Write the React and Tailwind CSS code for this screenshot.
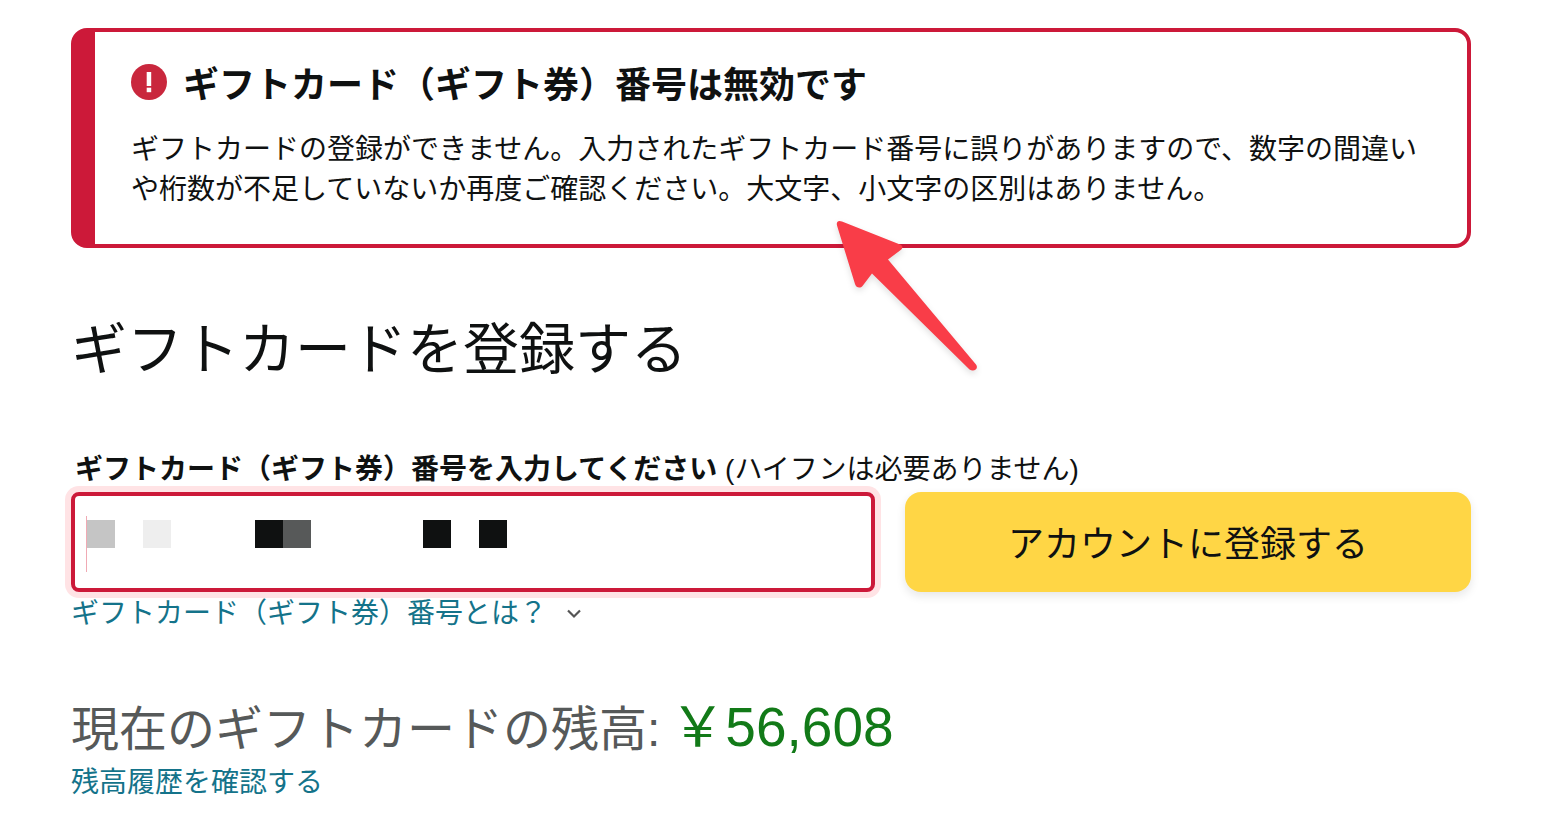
import React from "react";

function ErrorAlert() {
  return (
    <section
      role="alert"
      className="relative rounded-2xl border-4 border-l-24 border-[#cc1939] bg-white px-9 pt-8 pb-[34px]"
    >
      <div className="flex items-start gap-4">
        <svg viewBox="0 0 36 36" className="h-9 w-9 shrink-0" aria-hidden="true">
          <circle cx="18" cy="18" r="18" fill="#c9273d" />
          <rect x="15.700" y="8" width="4.500" height="14" fill="#fff" />
          <rect x="15.700" y="23.700" width="4.500" height="4.500" fill="#fff" />
        </svg>
        <h2 className="text-4xl leading-[44px] font-bold">
          ギフトカード（ギフト券）番号は無効です
        </h2>
      </div>
      <p className="mt-[22px] text-[28px] leading-10">
        ギフトカードの登録ができません。入力されたギフトカード番号に誤りがありますので、数字の間違いや桁数が不足していないか再度ご確認ください。大文字、小文字の区別はありません。
      </p>
      <svg
        viewBox="0 0 160 170"
        className="pointer-events-none absolute top-[178px] left-[735px] h-[170px] w-[160px] overflow-visible drop-shadow-md"
        aria-hidden="true"
      >
        <path
          d="M7 15.500C6 11.500 8.500 10 12 11.500L70 34.500C73.500 36 73 38.500 70 40.500L58 49.500L146 154.500C149 158.500 144 162.500 139.500 159.500L42 63.500L32.500 76C30 79 26 77.500 25 74Z"
          fill="#f93d48"
        />
      </svg>
    </section>
  );
}

function CodeForm() {
  return (
    <form onSubmit={(e) => e.preventDefault()} className="mt-[62px]">
      <label htmlFor="code" className="block pl-1 text-[28px] leading-10">
        <b>ギフトカード（ギフト券）番号を入力してください</b> (ハイフンは必要ありません)
      </label>
      <div className="mt-0.5 grid grid-cols-[804fr_566fr] gap-[30px]">
        <div className="relative">
          <input
            id="code"
            type="text"
            className="h-[100px] w-full rounded-lg border-4 border-[#cc1939] bg-white px-3 text-4xl ring-6 ring-[#ffe3e5] outline-none"
          />
          <svg
            viewBox="0 0 422 56"
            className="pointer-events-none absolute top-6 left-[15px] h-14 w-[422px]"
            shapeRendering="crispEdges"
            aria-hidden="true"
          >
            <rect x="0" y="0" width="1" height="56" fill="#f0aab4" />
            <rect x="1" y="4" width="28" height="28" fill="#c5c5c5" />
            <rect x="57" y="4" width="28" height="28" fill="#eeeeee" />
            <rect x="169" y="4" width="28" height="28" fill="#0f1111" />
            <rect x="197" y="4" width="28" height="28" fill="#575959" />
            <rect x="337" y="4" width="28" height="28" fill="#0f1111" />
            <rect x="393" y="4" width="28" height="28" fill="#0f1111" />
          </svg>
        </div>
        <button
          type="submit"
          className="h-[100px] rounded-2xl bg-[#ffd645] pt-1.5 text-4xl shadow-[0_4px_10px_rgba(15,17,17,0.1)]"
        >
          アカウントに登録する
        </button>
      </div>
      <a href="#about" className="mt-0.5 flex w-fit items-center gap-5 text-[28px] leading-10 text-[#14738a]">
        ギフトカード（ギフト券）番号とは？
        <svg viewBox="0 0 14 10" className="h-[10px] w-[14px]" aria-hidden="true">
          <path d="M1 1.500 7 7.500 13 1.500" fill="none" stroke="#555" strokeWidth="2.200" />
        </svg>
      </a>
    </form>
  );
}

export default function App() {
  return (
    <main className="min-h-screen bg-white pt-7 pr-[97px] pb-6 pl-[71px] font-['Liberation_Sans','Noto_Sans_CJK_JP',sans-serif] text-[#0f1111]">
      <ErrorAlert />
      <h1 className="mt-16 text-[56px] leading-[76px]">ギフトカードを登録する</h1>
      <CodeForm />
      <section className="mt-[60px]">
        <p className="flex items-baseline text-5xl leading-[66px] text-[#565959]">
          現在のギフトカードの残高:
          <span className="ml-2.5 text-[55px] text-[#127a18]">￥56,608</span>
        </p>
        <a href="#history" className="block w-fit text-[28px] leading-10 text-[#14738a]">
          残高履歴を確認する
        </a>
      </section>
    </main>
  );
}
